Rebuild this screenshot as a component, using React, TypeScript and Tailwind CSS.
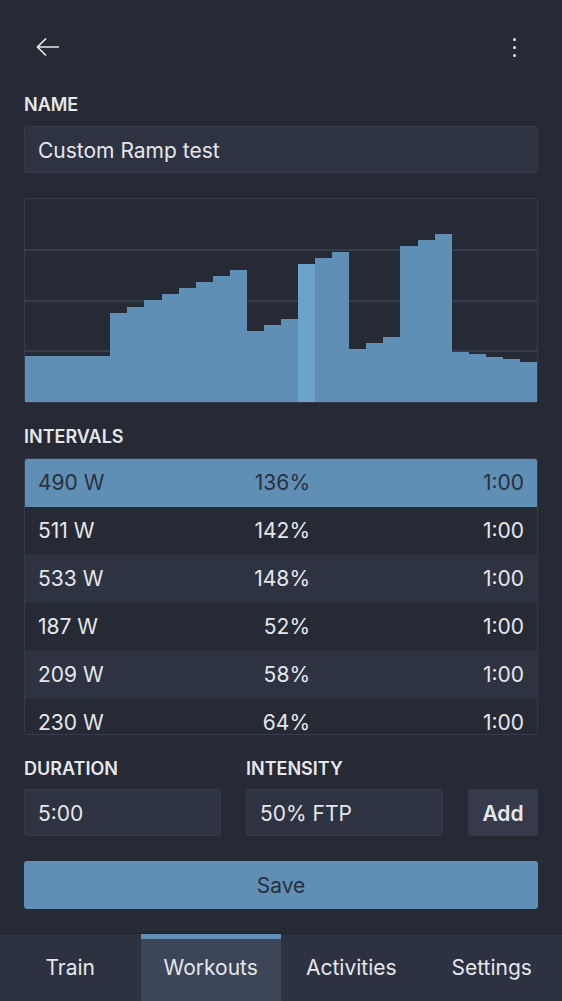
import { useState } from "react";

type Interval = { pct: number; secs: number };

const FTP = 360;

const intervals: Interval[] = [
  { pct: 45, secs: 300 },
  ...[88, 94, 100, 106, 112, 118, 124, 130, 70, 76, 82, 136, 142, 148, 52, 58, 64, 154, 160, 166, 49, 47, 44, 42, 39].map(
    pct => ({ pct, secs: 60 })
  ),
];

const fmt = (secs: number) => `${Math.floor(secs / 60)}:${String(secs % 60).padStart(2, "0")}`;

const CHART_W = 512;
const CHART_H = 203;

function Chart({ selected }: { selected: number }) {
  const total = intervals.reduce((s, i) => s + i.secs, 0);
  let t = 0;
  return (
    <div className="mt-[25px] h-[205px] rounded-[3px] border border-[#363c4b]">
      <svg width={CHART_W} height={CHART_H} className="block" shapeRendering="crispEdges">
        {[1, 2, 3].map(n => (
          <line key={n} x1={0} x2={CHART_W} y1={Math.round((CHART_H * n) / 4)} y2={Math.round((CHART_H * n) / 4)} stroke="#363c4b" strokeWidth={2} />
        ))}
        {intervals.map((iv, i) => {
          const x0 = Math.round((t / total) * CHART_W);
          t += iv.secs;
          const x1 = Math.round((t / total) * CHART_W);
          const h = Math.round((iv.pct / 200) * CHART_H);
          return (
            <rect key={i} x={x0} y={CHART_H - h} width={x1 - x0} height={h} fill={i === selected ? "#6ba3cc" : "#5f8fb4"} />
          );
        })}
      </svg>
    </div>
  );
}

export default function App() {
  const [selected] = useState(12);
  const [tab, setTab] = useState("Workouts");

  return (
    <div className="flex h-[1001px] flex-col bg-[#262a35] font-['Inter','Noto_Sans',sans-serif] text-[#e5e7eb]">
      <main className="flex-1 px-6">
        {/* Header */}
        <div className="flex h-[90px] items-center justify-between pt-[4px]">
          <button className="ml-3 text-[#e5e7eb]">
            <svg width="24" height="20" viewBox="0 0 24 20" fill="none" stroke="currentColor" strokeWidth={1.7}>
              <path d="M23 10H2M10 1.5 1.5 10l8.5 8.5" />
            </svg>
          </button>
          <button className="mr-[22px] flex flex-col gap-[5px]">
            <span className="h-[3px] w-[3px] rounded-full bg-[#e5e7eb]" />
            <span className="h-[3px] w-[3px] rounded-full bg-[#e5e7eb]" />
            <span className="h-[3px] w-[3px] rounded-full bg-[#e5e7eb]" />
          </button>
        </div>

        <label className="block pt-[3px] text-[18px] leading-6 font-semibold">NAME</label>
        <div className="mt-[9px] flex h-[47px] items-center rounded-[3px] border border-[#363c4b] bg-[#2e3342] px-[13px] pt-[2px] text-[21px]">
          Custom Ramp test
        </div>

        <Chart selected={selected} />

        <label className="mt-[19px] block pt-[3px] text-[18px] leading-6 font-semibold">INTERVALS</label>
        <div className="mt-[9px] h-[277px] overflow-hidden rounded-[3px] border border-[#363c4b]">
          {intervals.slice(selected).map((iv, k) => {
            const i = k + selected;
            const bg = i === selected ? "bg-[#5f8fb4] text-[#2a2f3b]" : i % 2 === 0 ? "bg-[#2e3342]" : "bg-[#262a35]";
            return (
              <div key={i} className={`grid h-12 grid-cols-[1fr_58px_1fr] items-center px-[13px] text-[21px] ${bg}`}>
                <span>{Math.round((iv.pct * FTP) / 100)} W</span>
                <span className="text-right">{iv.pct}%</span>
                <span className="text-right">{fmt(iv.secs)}</span>
              </div>
            );
          })}
        </div>

        <div className="mt-[20px] grid grid-cols-[1fr_1fr_70px] gap-x-[25px]">
          <label className="pt-[2px] text-[18px] leading-6 font-semibold">DURATION</label>
          <label className="pt-[2px] text-[18px] leading-6 font-semibold">INTENSITY</label>
          <span />
          <div className="mt-[8px] flex h-[47px] items-center rounded-[3px] border border-[#363c4b] bg-[#2e3342] px-[13px] pt-[2px] text-[21px]">
            5:00
          </div>
          <div className="mt-[8px] flex h-[47px] items-center rounded-[3px] border border-[#363c4b] bg-[#2e3342] px-[13px] pt-[2px] text-[21px]">
            50% FTP
          </div>
          <button className="mt-[8px] h-[47px] rounded-[3px] bg-[#353b4b] pt-[2px] text-[21px] font-semibold">Add</button>
        </div>

        <button className="mt-[25px] h-12 w-full rounded-[3px] bg-[#5f8fb4] pt-[2px] text-[21px] text-[#2a2f3b]">Save</button>
      </main>

      {/* Bottom nav */}
      <nav className="grid h-[68px] grid-cols-4 border-t border-[#1f232c] bg-[#2d3240]">
        {["Train", "Workouts", "Activities", "Settings"].map(t => (
          <button
            key={t}
            onClick={() => setTab(t)}
            className={`flex items-center justify-center text-[21px] ${
              tab === t ? "border-t-[5px] border-[#5f8fb4] bg-[#3d4558] pb-[5px]" : ""
            }`}
          >
            {t}
          </button>
        ))}
      </nav>
    </div>
  );
}
